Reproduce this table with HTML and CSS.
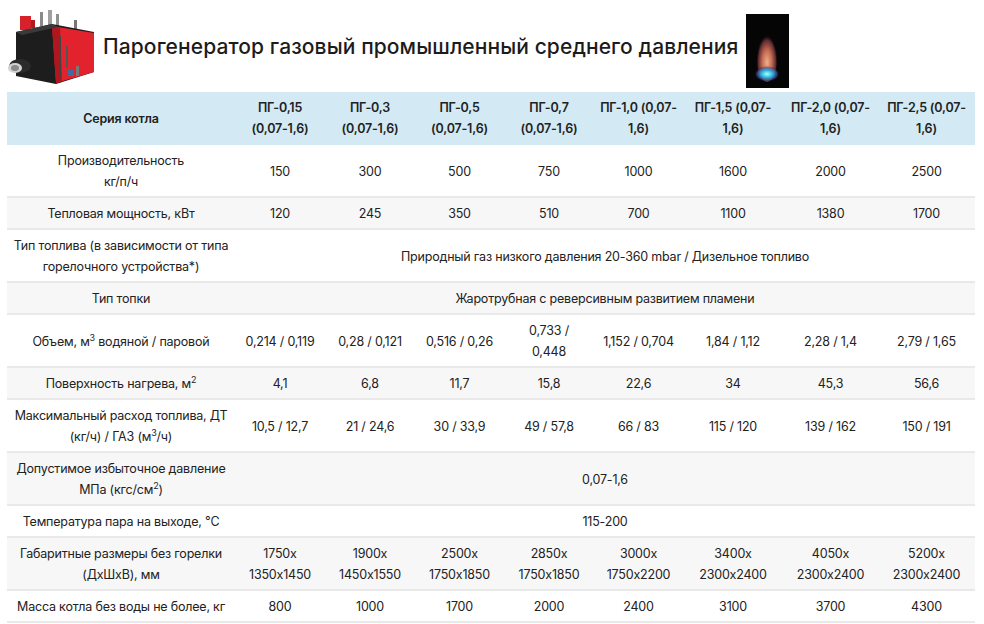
FILE: index.html
```html
<!DOCTYPE html>
<html lang="ru">
<head>
<meta charset="utf-8">
<link rel="stylesheet" href="styles.css">
</head>
<body>
<div class="page">
  <header class="head">
    <svg class="boiler" width="92" height="80" viewBox="0 0 92 80">
      <rect x="16" y="10" width="11" height="14" fill="#d8222b"/>
      <rect x="27" y="14" width="4" height="8" fill="#b01a20"/>
      <rect x="36" y="6" width="3" height="14" fill="#8a8a8a"/>
      <rect x="44" y="4" width="4" height="16" fill="#a0a0a0"/>
      <rect x="52" y="8" width="3" height="12" fill="#909090"/>
      <rect x="70" y="14" width="3" height="10" fill="#777"/>
      <polygon points="12,26 48,18 90,26 90,66 52,78 12,70" fill="#1d1d1d"/>
      <polygon points="48,20 90,27 90,66 52,77" fill="#e2232d"/>
      <polygon points="48,20 56,22 58,76 52,77" fill="#b0161e"/>
      <polygon points="12,26 48,18 54,21 18,29" fill="#3a3a3a"/>
      <rect x="55" y="30" width="2" height="42" fill="#444"/>
      <rect x="62" y="40" width="2" height="22" fill="#555"/>
      <ellipse cx="16" cy="60" rx="11" ry="7" fill="#2b2b2b"/>
      <ellipse cx="11" cy="62" rx="7" ry="5" fill="#d2d2d2"/>
      <ellipse cx="11" cy="62" rx="4" ry="3" fill="#8a8a8a"/>
      <rect x="64" y="64" width="6" height="6" fill="#3a6ea5"/>
      <rect x="72" y="60" width="3" height="10" fill="#7a7a7a"/>
    </svg>
    <h1 class="title">Парогенератор газовый промышленный среднего давления</h1>
    <svg class="flame" width="43" height="74" viewBox="0 0 43 74">
      <defs>
        <radialGradient id="fl" cx="0.5" cy="0.65" r="0.5">
          <stop offset="0" stop-color="#f0b08c"/>
          <stop offset="0.45" stop-color="#c2684e"/>
          <stop offset="0.8" stop-color="#5a2a30"/>
          <stop offset="1" stop-color="#000" stop-opacity="0"/>
        </radialGradient>
        <radialGradient id="bl" cx="0.5" cy="0.5" r="0.5">
          <stop offset="0" stop-color="#b0fbff"/>
          <stop offset="0.4" stop-color="#2ec3e0"/>
          <stop offset="0.75" stop-color="#3d5bb0" stop-opacity="0.7"/>
          <stop offset="1" stop-color="#000" stop-opacity="0"/>
        </radialGradient>
      </defs>
      <rect width="43" height="74" fill="#050505"/>
      <ellipse cx="21" cy="40" rx="11" ry="28" fill="url(#fl)"/>
      <ellipse cx="21" cy="60" rx="13" ry="8" fill="url(#bl)"/>
    </svg>
  </header>

  <table class="spec">
    <colgroup>
      <col class="c-name">
      <col class="c1"><col class="c2"><col class="c3"><col class="c4">
      <col class="c5"><col class="c6"><col class="c7"><col class="c8">
    </colgroup>
    <thead>
      <tr>
        <th>Серия котла</th>
        <th>ПГ-0,15<br>(0,07-1,6)</th>
        <th>ПГ-0,3<br>(0,07-1,6)</th>
        <th>ПГ-0,5<br>(0,07-1,6)</th>
        <th>ПГ-0,7<br>(0,07-1,6)</th>
        <th>ПГ-1,0 (0,07-<br>1,6)</th>
        <th>ПГ-1,5 (0,07-<br>1,6)</th>
        <th>ПГ-2,0 (0,07-<br>1,6)</th>
        <th>ПГ-2,5 (0,07-<br>1,6)</th>
      </tr>
    </thead>
    <tbody>
      <tr>
        <td>Производительность<br>кг/п/ч</td>
        <td>150</td><td>300</td><td>500</td><td>750</td><td>1000</td><td>1600</td><td>2000</td><td>2500</td>
      </tr>
      <tr class="alt">
        <td>Тепловая мощность, кВт</td>
        <td>120</td><td>245</td><td>350</td><td>510</td><td>700</td><td>1100</td><td>1380</td><td>1700</td>
      </tr>
      <tr>
        <td>Тип топлива (в зависимости от типа<br>горелочного устройства*)</td>
        <td colspan="8">Природный газ низкого давления 20-360 mbar / Дизельное топливо</td>
      </tr>
      <tr class="alt">
        <td>Тип топки</td>
        <td colspan="8">Жаротрубная с реверсивным развитием пламени</td>
      </tr>
      <tr>
        <td>Объем, м<sup>3</sup> водяной / паровой</td>
        <td>0,214 / 0,119</td><td>0,28 / 0,121</td><td>0,516 / 0,26</td><td>0,733 /<br>0,448</td><td>1,152 / 0,704</td><td>1,84 / 1,12</td><td>2,28 / 1,4</td><td>2,79 / 1,65</td>
      </tr>
      <tr class="alt">
        <td>Поверхность нагрева, м<sup>2</sup></td>
        <td>4,1</td><td>6,8</td><td>11,7</td><td>15,8</td><td>22,6</td><td>34</td><td>45,3</td><td>56,6</td>
      </tr>
      <tr>
        <td>Максимальный расход топлива, ДТ<br>(кг/ч) / ГАЗ (м<sup>3</sup>/ч)</td>
        <td>10,5 / 12,7</td><td>21 / 24,6</td><td>30 / 33,9</td><td>49 / 57,8</td><td>66 / 83</td><td>115 / 120</td><td>139 / 162</td><td>150 / 191</td>
      </tr>
      <tr class="alt">
        <td>Допустимое избыточное давление<br>МПа (кгс/см<sup>2</sup>)</td>
        <td colspan="8">0,07-1,6</td>
      </tr>
      <tr>
        <td>Температура пара на выходе, °С</td>
        <td colspan="8">115-200</td>
      </tr>
      <tr class="alt">
        <td>Габаритные размеры без горелки<br>(ДхШхВ), мм</td>
        <td>1750x<br>1350x1450</td><td>1900x<br>1450x1550</td><td>2500x<br>1750x1850</td><td>2850x<br>1750x1850</td><td>3000x<br>1750x2200</td><td>3400x<br>2300x2400</td><td>4050x<br>2300x2400</td><td>5200x<br>2300x2400</td>
      </tr>
      <tr>
        <td>Масса котла без воды не более, кг</td>
        <td>800</td><td>1000</td><td>1700</td><td>2000</td><td>2400</td><td>3100</td><td>3700</td><td>4300</td>
      </tr>
    </tbody>
  </table>
</div>
</body>
</html>
```

FILE: styles.css
```css
html, body {
  margin: 0;
  padding: 0;
  background: #fff;
}

.page {
  width: 968px;
  padding: 0 0 0 7px;
  font-family: "Inter", "Open Sans", sans-serif;
  font-feature-settings: "calt" 0;
  color: #222;
}

.head {
  display: flex;
  align-items: center;
  height: 92px;
}

.boiler {
  margin-left: -3px;
  margin-right: 7px;
  flex: none;
}

.title {
  margin: 0;
  font-size: 21px;
  font-weight: 500;
  letter-spacing: 0.1px;
  color: #1c1c1c;
  white-space: nowrap;
}

.flame {
  margin-left: 8px;
  margin-top: 10px;
  flex: none;
}

.spec {
  width: 968px;
  border-collapse: collapse;
  table-layout: fixed;
  font-size: 12.5px;
  letter-spacing: -0.2px;
  line-height: 21px;
}

.c-name { width: 228px; }
.c1 { width: 90px; }
.c2 { width: 90px; }
.c3 { width: 89px; }
.c4 { width: 90px; }
.c5 { width: 89px; }
.c6 { width: 100px; }
.c7 { width: 95px; }
.c8 { width: 97px; }

.spec th,
.spec td {
  text-align: center;
  vertical-align: middle;
  white-space: nowrap;
  padding: 5px 0 4px;
}

.spec thead th {
  background: #d3eaf5;
  font-weight: 600;
  padding: 5px 0 6px;
}

.spec tbody tr {
  border-top: 2px solid #e9e9e9;
}

.spec tbody tr:first-child {
  border-top: 0;
}

.spec tbody tr:last-child {
  border-bottom: 2px solid #e9e9e9;
}

.spec tr.alt td {
  background: #f7f7f7;
}

.spec sup {
  font-size: 9px;
  line-height: 0;
  vertical-align: 5px;
}
```
